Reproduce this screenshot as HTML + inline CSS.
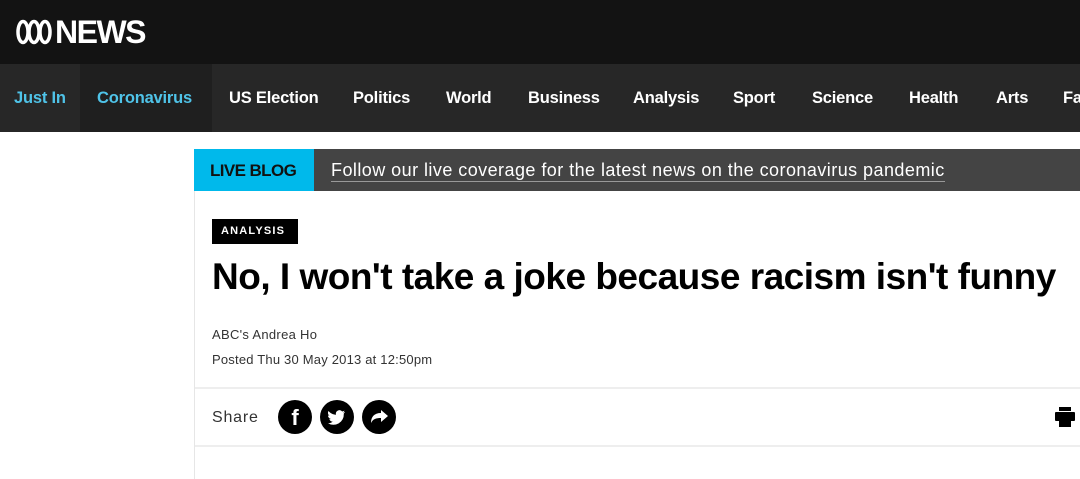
<!DOCTYPE html>
<html><head><style>
*{margin:0;padding:0;box-sizing:border-box}
body{width:1080px;height:471px;overflow:hidden;background:#fff;font-family:"Liberation Sans",sans-serif;position:relative}
.hdr{position:absolute;left:0;top:0;width:1080px;height:64px;background:#131313}
.logo{position:absolute;left:55px;top:14px;color:#fff;font-weight:bold;font-size:32px;letter-spacing:-1.5px}
.nav{position:absolute;left:0;top:64px;width:1080px;height:68px;background:#272727}
.cv{position:absolute;left:80px;top:0;width:132px;height:68px;background:#1f1f1f}
.nav span{position:absolute;top:25px;font-size:16.5px;font-weight:bold;color:#fff;white-space:nowrap;letter-spacing:-0.2px}
.card{position:absolute;left:194px;top:149px;width:900px;height:330px;border-left:1px solid #e6e6e6}
.lb{position:absolute;left:194px;top:149px;width:120px;height:42px;background:#00b9eb;font-weight:bold;font-size:17px;color:#111;padding:12px 0 0 16px;letter-spacing:-0.6px}
.lt{position:absolute;left:314px;top:149px;width:766px;height:42px;background:#444;color:#fff;font-size:18px;padding:11px 0 0 17px;letter-spacing:0.45px}
.lt u{text-decoration:none;border-bottom:1px solid #999;padding-bottom:1px}
.tag{position:absolute;left:212px;top:219px;width:86px;height:25px;background:#000;color:#fff;font-weight:bold;font-size:11px;letter-spacing:1.2px;padding:6px 0 0 9px}
h1{position:absolute;left:212px;top:256px;font-size:37px;font-weight:bold;color:#000;letter-spacing:-0.5px;white-space:nowrap}
.by{position:absolute;left:212px;top:327px;font-size:13px;color:#333;letter-spacing:0.3px}
.pd{position:absolute;left:212px;top:352px;font-size:13px;color:#333;letter-spacing:0.2px}
.l1{position:absolute;left:195px;top:387px;width:885px;height:2px;background:#eeeeee}
.l2{position:absolute;left:195px;top:445px;width:885px;height:2px;background:#eeeeee}
.share{position:absolute;left:212px;top:409px;font-size:16px;color:#333;letter-spacing:0.8px}
.ic{position:absolute;top:400px;width:34px;height:34px;border-radius:50%;background:#000;color:#fff;text-align:center;font-weight:bold}
</style></head><body>
<div class="hdr">
<svg style="position:absolute;left:16px;top:19px" width="36" height="26" viewBox="0 0 36 26" fill="none" stroke="#fff" stroke-width="3.5"><ellipse cx="7" cy="13" rx="5" ry="10.5"/><ellipse cx="18" cy="13" rx="5" ry="10.5"/><ellipse cx="29" cy="13" rx="5" ry="10.5"/></svg>
<div class="logo">NEWS</div></div>
<div class="nav"><div class="cv"></div>
<span style="left:14px;color:#4fc3e8">Just In</span>
<span style="left:97px;color:#4fc3e8">Coronavirus</span>
<span style="left:229px">US Election</span>
<span style="left:353px">Politics</span>
<span style="left:446px">World</span>
<span style="left:528px">Business</span>
<span style="left:633px">Analysis</span>
<span style="left:733px">Sport</span>
<span style="left:812px">Science</span>
<span style="left:909px">Health</span>
<span style="left:996px">Arts</span>
<span style="left:1063px">Fa</span>
</div>
<div class="card"></div>
<div class="lb">LIVE BLOG</div>
<div class="lt"><u>Follow our live coverage for the latest news on the coronavirus pandemic</u></div>
<div class="tag">ANALYSIS</div>
<h1>No, I won't take a joke because racism isn't funny</h1>
<div class="by">ABC's Andrea Ho</div>
<div class="pd">Posted Thu 30 May 2013 at 12:50pm</div>
<div class="l1"></div>
<div class="share">Share</div>
<div class="ic" style="left:278px;font-size:22px;line-height:36px">f</div>
<div class="ic" style="left:320px"><svg width="34" height="34" viewBox="0 0 34 34"><path d="M25 12c-.7.3-1.4.5-2.1.6.8-.5 1.3-1.2 1.6-2-.7.4-1.5.7-2.3.9a3.6 3.6 0 0 0-6.2 3.3c-3-.2-5.7-1.6-7.5-3.8-1 1.7-.5 3.8 1.1 4.8-.6 0-1.1-.2-1.6-.4 0 1.7 1.2 3.2 2.9 3.6-.5.1-1.1.2-1.6.1.5 1.5 1.8 2.5 3.4 2.5A7.3 7.3 0 0 1 8 23.2 10.3 10.3 0 0 0 23.8 14v-.5c.5-.4 1-.9 1.2-1.5z" fill="#fff"/></svg></div>
<div class="ic" style="left:362px"><svg width="34" height="34" viewBox="0 0 34 34"><path d="M19 10l7 6-7 6v-4c-5 0-8 1-10 5 0-6 3-10 10-10z" fill="#fff"/></svg></div>
<svg style="position:absolute;left:1054px;top:406px" width="22" height="22" viewBox="0 0 22 22"><rect x="5" y="1" width="12" height="4" fill="#000"/><rect x="1" y="6" width="20" height="9" rx="1" fill="#000"/><rect x="5" y="12" width="12" height="9" fill="#000"/></svg>
<div class="l2"></div>
</body></html>
